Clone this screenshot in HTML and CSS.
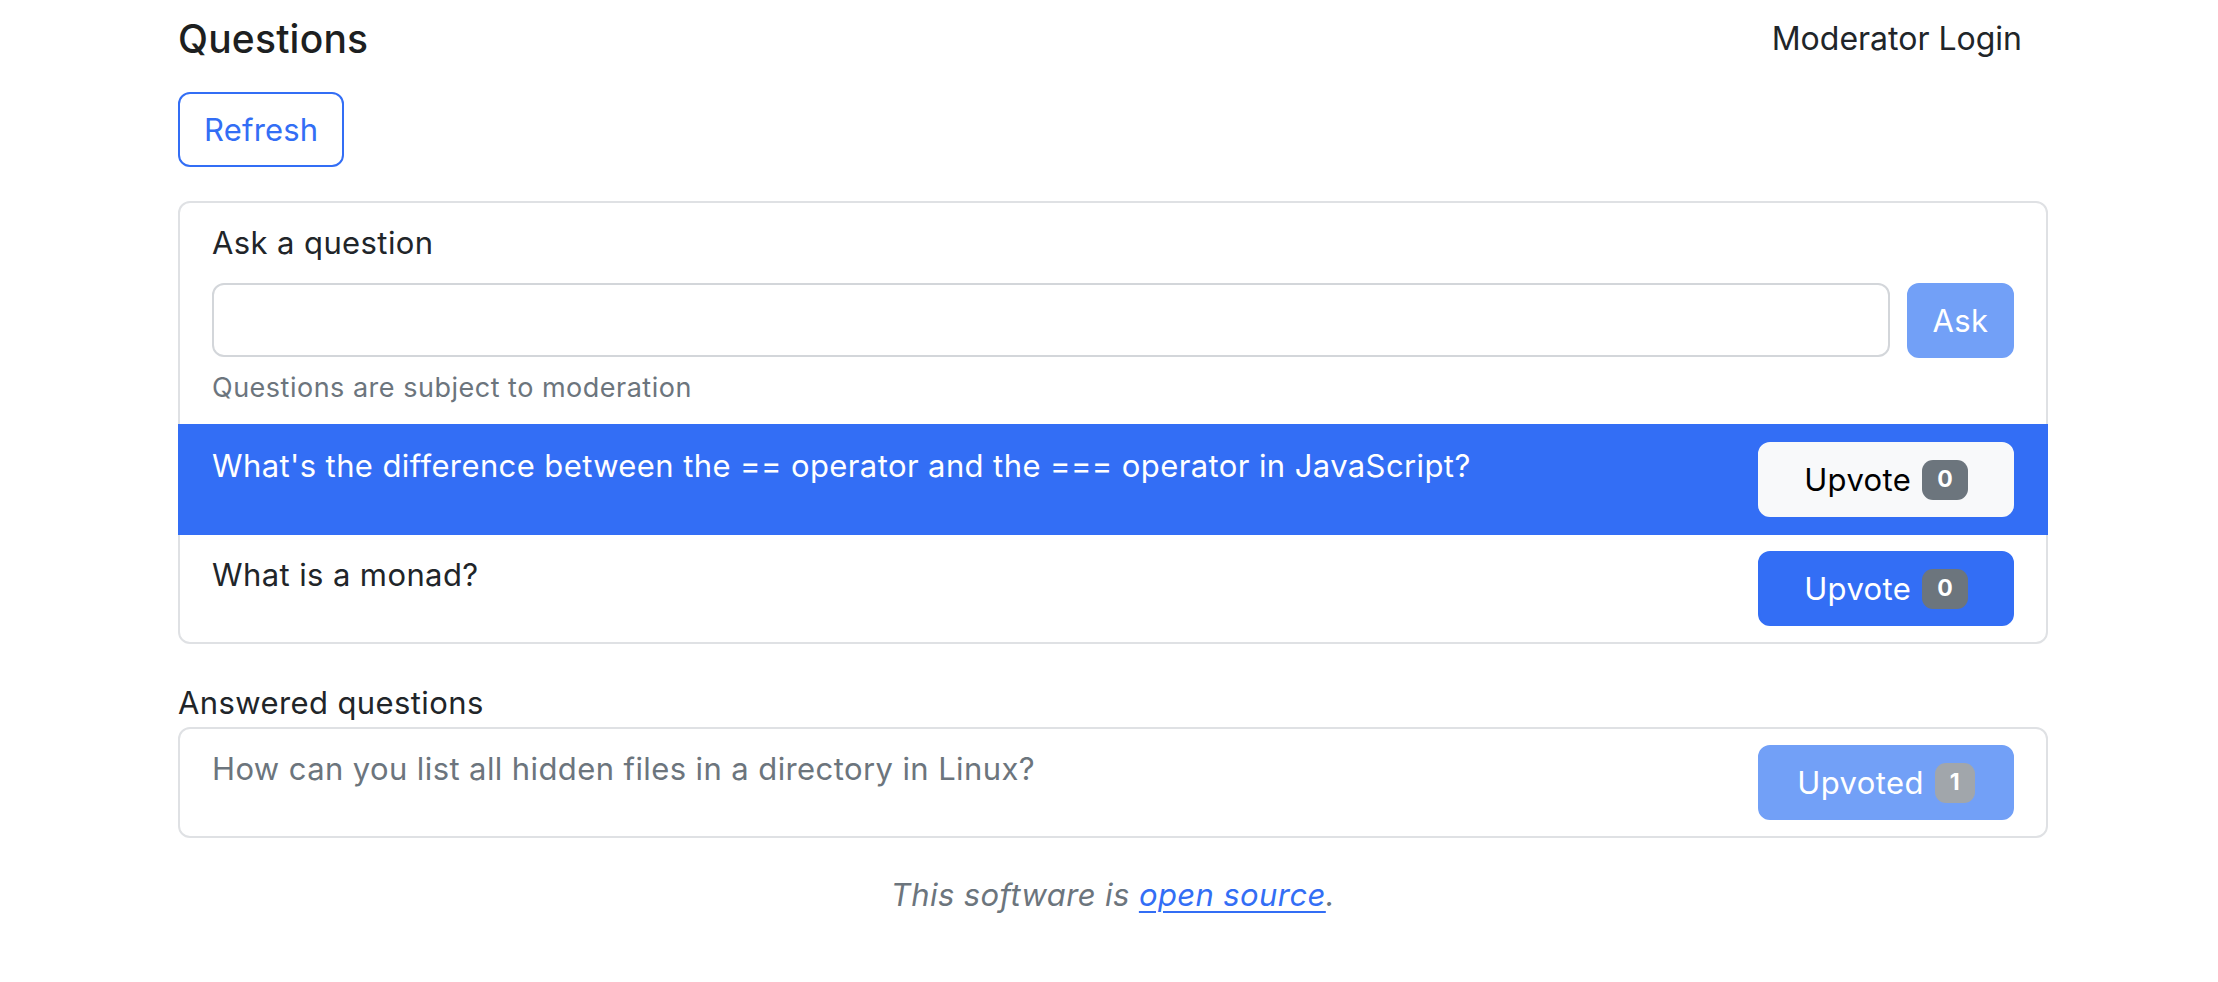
FILE: index.html
```html
<!DOCTYPE html>
<html lang="en">
<head>
<meta charset="utf-8">
<title>Questions</title>
<link rel="stylesheet" href="styles.css">
</head>
<body>
<div class="page">
  <header class="topbar">
    <h1 class="title">Questions</h1>
    <a class="login" href="#">Moderator Login</a>
  </header>
  <button class="btn btn-outline" type="button">Refresh</button>

  <section class="card">
    <div class="ask">
      <label class="ask-label" for="q">Ask a question</label>
      <div class="ask-row">
        <input class="ask-input" id="q" type="text">
        <button class="btn btn-ask" type="button" disabled>Ask</button>
      </div>
      <div class="form-text">Questions are subject to moderation</div>
    </div>
    <ul class="qlist">
      <li class="q q-active">
        <span class="q-text">What's the difference between the == operator and the === operator in JavaScript?</span>
        <button class="btn vote vote-light" type="button">Upvote<span class="badge">0</span></button>
      </li>
      <li class="q">
        <span class="q-text">What is a monad?</span>
        <button class="btn vote vote-primary" type="button">Upvote<span class="badge">0</span></button>
      </li>
    </ul>
  </section>

  <h2 class="section-title">Answered questions</h2>
  <section class="card">
    <ul class="qlist">
      <li class="q q-answered">
        <span class="q-text">How can you list all hidden files in a directory in Linux?</span>
        <button class="btn vote vote-done" type="button" disabled>Upvoted<span class="badge badge-faded">1</span></button>
      </li>
    </ul>
  </section>

  <footer class="footer">This software is <a href="#" class="footer-link">open source</a>.</footer>
</div>
</body>
</html>
```

FILE: styles.css
```css
* { box-sizing: border-box; }

html, body {
  margin: 0;
  padding: 0;
  background: #ffffff;
}

body {
  font-family: Inter, "Noto Sans", "Liberation Sans", sans-serif;
  font-size: 31px;
  line-height: 48px;
  letter-spacing: 0.4px;
  color: #212529;
}

.page {
  width: 1870px;
  margin-left: 178px;
}

.topbar {
  display: flex;
  justify-content: space-between;
  align-items: flex-start;
  padding-top: 15px;
  height: 63px;
}

.title {
  margin: 0;
  font-size: 39px;
  font-weight: 500;
  line-height: 48px;
  letter-spacing: 0.2px;
  color: #1d1f21;
}

.login {
  font-size: 32px;
  line-height: 48px;
  letter-spacing: 0;
  color: #212529;
  text-decoration: none;
  padding-right: 26px;
}

.btn {
  font-family: inherit;
  font-size: 31px;
  line-height: 48px;
  letter-spacing: 0.4px;
  border-radius: 12px;
  border: 2px solid transparent;
  cursor: pointer;
  display: inline-flex;
  align-items: center;
  justify-content: center;
}

.btn-outline {
  margin-top: 29px;
  height: 75px;
  padding: 0 24px;
  letter-spacing: 0.2px;
  background: #ffffff;
  border-color: #336ef5;
  color: #336ef5;
}

.card {
  margin-top: 34px;
  border: 2px solid #dfe1e4;
  border-radius: 12px;
  background: #ffffff;
}

.ask {
  padding: 16px 32px 16px 32px;
}

.ask-label {
  display: block;
  margin-bottom: 16px;
}

.ask-row {
  display: flex;
  align-items: flex-start;
  gap: 17px;
  height: 75px;
}

.ask-input {
  flex: 1;
  height: 74px;
  border: 2px solid #d3d6da;
  border-radius: 12px;
  font-family: inherit;
  font-size: 31px;
  padding: 0 24px;
  background: #ffffff;
}

.btn-ask {
  width: 107px;
  height: 75px;
  padding: 0;
  background: #72a0f7;
  border-color: #72a0f7;
  color: #ffffff;
}

.form-text {
  margin-top: 10px;
  font-size: 27px;
  line-height: 40px;
  letter-spacing: 0.5px;
  color: #6c757d;
}

.qlist {
  list-style: none;
  margin: 0;
  padding: 0;
}

.q {
  display: flex;
  align-items: flex-start;
  justify-content: space-between;
  gap: 24px;
  padding: 16px 32px;
}

.q-active {
  margin: 0 -2px;
  padding: 18px 34px;
  background: #336ef5;
  color: #ffffff;
}

.q-answered {
  color: #6c757d;
}

.q-text {
  flex: 1;
}

.vote {
  flex-shrink: 0;
  width: 256px;
  height: 75px;
  padding: 0;
  gap: 11px;
}

.vote-light {
  background: #f8f9fa;
  border-color: #f8f9fa;
  color: #000000;
}

.vote-primary {
  background: #336ef5;
  border-color: #336ef5;
  color: #ffffff;
}

.vote-done {
  background: #72a0f7;
  border-color: #72a0f7;
  color: #ffffff;
}

.badge {
  display: inline-flex;
  align-items: center;
  justify-content: center;
  height: 40px;
  padding: 0 15px;
  border-radius: 11px;
  background: #6c757d;
  color: #ffffff;
  font-size: 23px;
  font-weight: 700;
  line-height: 1;
  letter-spacing: 0;
}

.badge-faded {
  background: #a1a6ab;
}

.section-title {
  margin: 35px 0 0 0;
  font-size: 31px;
  font-weight: 400;
  line-height: 48px;
}

.section-title + .card {
  margin-top: 0;
}

.footer {
  margin-top: 33px;
  text-align: center;
  font-style: italic;
  color: #6c757d;
}

.footer-link {
  color: #336ef5;
  text-decoration: underline;
  text-underline-offset: 5px;
  text-decoration-thickness: 2px;
}
```
